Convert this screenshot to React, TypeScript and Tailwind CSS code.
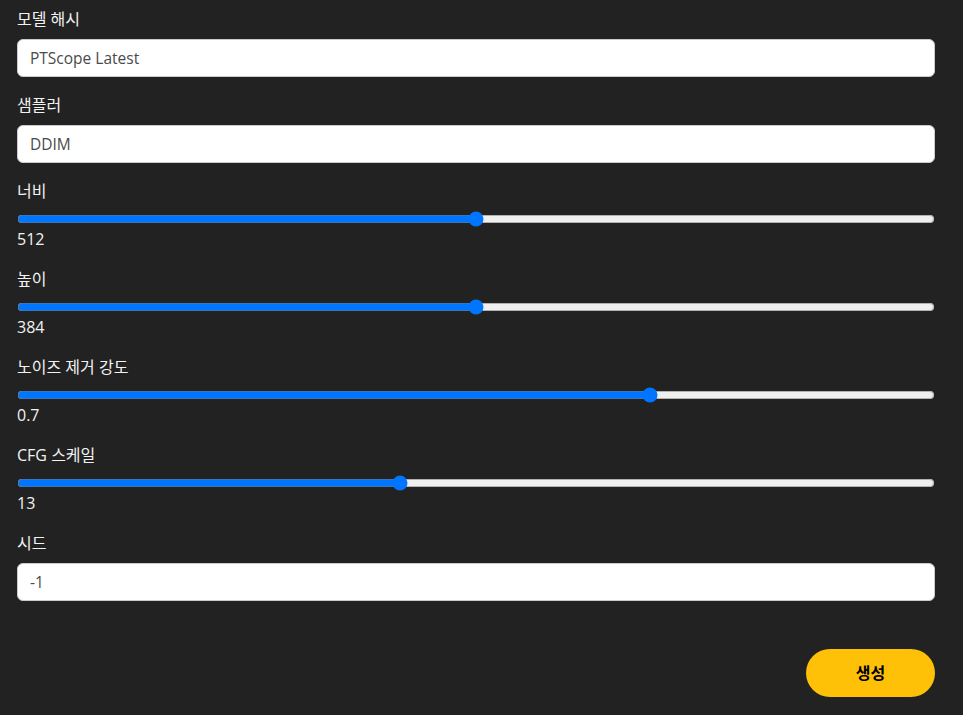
import React from 'react';

const font = "font-['Open_Sans','Noto_Sans_CJK_KR',sans-serif]";

const TextField: React.FC<{ label: string; value: string }> = ({ label, value }) => (
  <div className="mb-4">
    <label className="block text-base leading-6 text-[#f2f2f2] mb-2">{label}</label>
    <input
      type="text"
      defaultValue={value}
      className="block w-full h-[38px] rounded-md border border-[#c8ccd0] bg-white px-3 text-[15.5px] text-[#4a4a4a] outline-none"
    />
  </div>
);

const RangeField: React.FC<{ label: string; value: number; display: string }> = ({ label, value, display }) => (
  <div className="mb-4">
    <label className="block text-base leading-6 text-[#f2f2f2]">{label}</label>
    <div className="h-6 pt-2">
      <input type="range" min={0} max={902} defaultValue={value} className="block w-full h-4" />
    </div>
    <div className="text-base leading-6 text-[#f2f2f2]">{display}</div>
  </div>
);

const App: React.FC = () => {
  return (
    <div className={`min-h-[715px] bg-[#222222] pl-[17px] pr-[28px] pt-[7px] ${font}`}>
      <TextField label="모델 해시" value="PTScope Latest" />
      <TextField label="샘플러" value="DDIM" />
      <RangeField label="너비" value={451} display="512" />
      <RangeField label="높이" value={451} display="384" />
      <RangeField label="노이즈 제거 강도" value={625} display="0.7" />
      <RangeField label="CFG 스케일" value={375} display="13" />
      <TextField label="시드" value="-1" />
      <div className="flex justify-end pt-8">
        <button className="h-12 w-[129px] rounded-full bg-[#ffc107] text-base font-bold text-black">생성</button>
      </div>
    </div>
  );
};

export default App;
